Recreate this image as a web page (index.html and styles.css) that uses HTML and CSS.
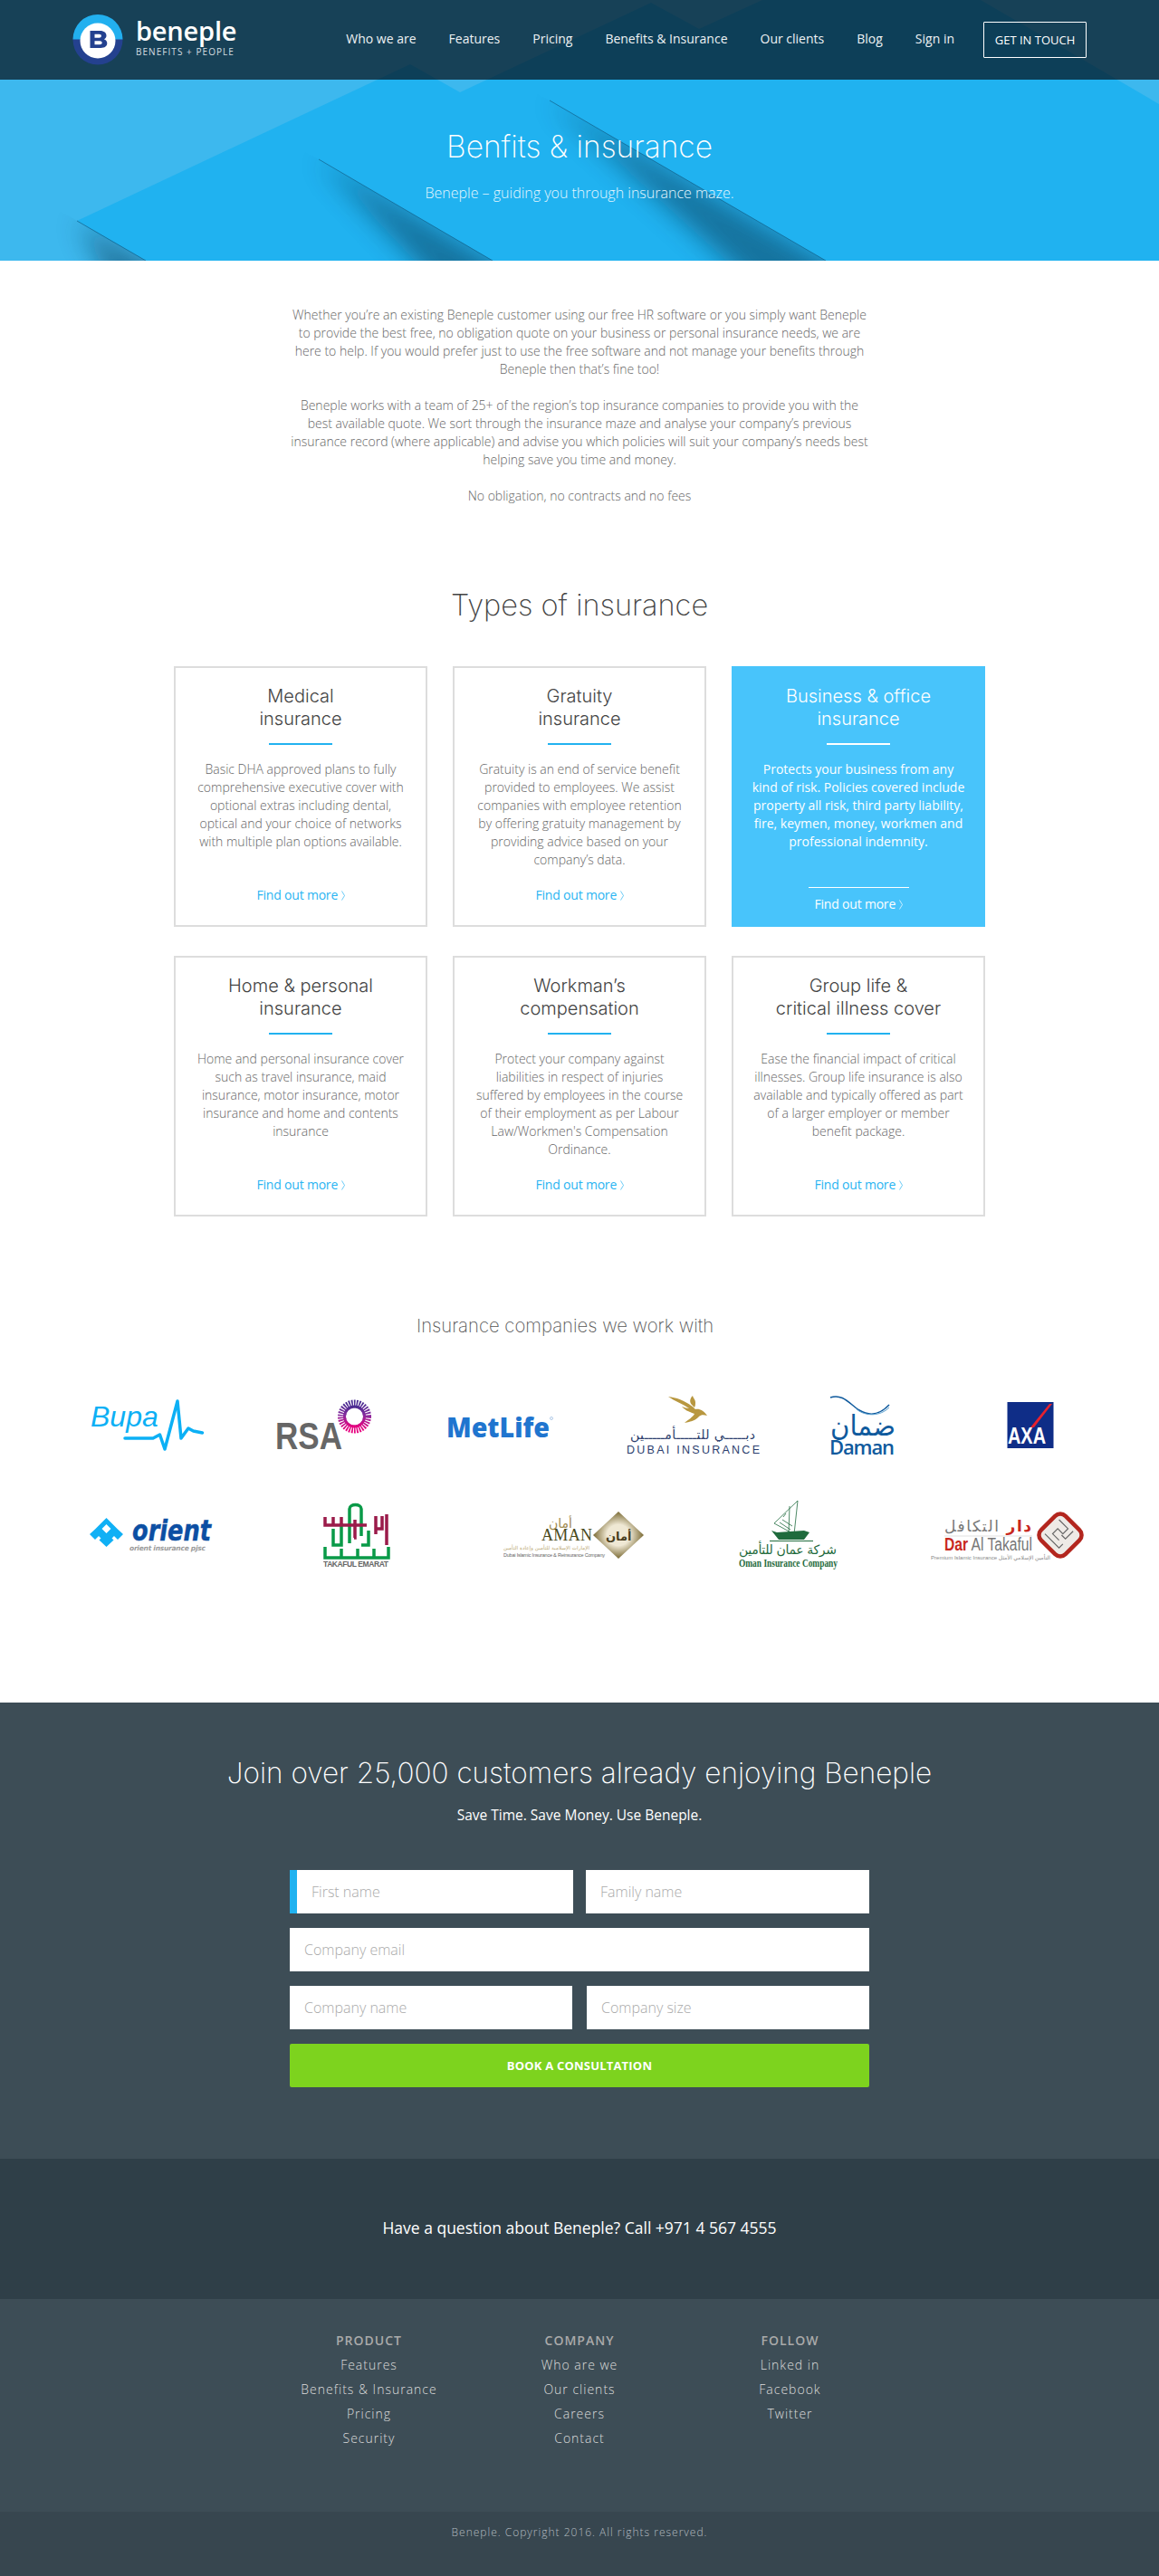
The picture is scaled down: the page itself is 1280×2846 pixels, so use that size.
FILE: index.html
```html
<!DOCTYPE html>
<html lang="en">
<head>
    <meta charset="UTF-8">
    <meta name="viewport" content="width=device-width, initial-scale=1.0">
    <title>Beneple - Benefits &amp; Insurance</title>
    <link rel="stylesheet" href="styles.css">
</head>
<body>
    <section class="hero">
        <svg class="hero-bg" width="1280" height="288" viewBox="0 0 1280 288">
            <defs>
                <filter id="soft" x="-30%" y="-30%" width="160%" height="160%"><feGaussianBlur stdDeviation="14"/></filter>
                <clipPath id="clip1"><polygon points="-90,142 261,346 100,620 -400,400"/></clipPath>
                <clipPath id="clip2"><polygon points="180,76 644,346 400,760 -100,500"/></clipPath>
                <clipPath id="clip3"><polygon points="435,11 1012,346 700,800 200,500"/></clipPath>
            </defs>
            <polygon fill="#20b2f0" points="85,244 453,71 508,102 719,3 772,32 842,0 1083,0 1280,115 1280,288 161,288"/>
            <g clip-path="url(#clip1)"><polygon filter="url(#soft)" fill="#0a3f5c" opacity=".55" points="85,244 261,346 160,380"/></g>
            <g clip-path="url(#clip2)"><polygon filter="url(#soft)" fill="#0a3f5c" opacity=".55" points="352,176 644,346 550,385"/></g>
            <g clip-path="url(#clip3)"><polygon filter="url(#soft)" fill="#0a3f5c" opacity=".55" points="607,111 1012,346 910,385"/></g>
            <line class="hero-edge" x1="85" y1="244" x2="161" y2="288"/>
            <line class="hero-edge" x1="352" y1="176" x2="544" y2="288"/>
            <line class="hero-edge" x1="607" y1="111" x2="912" y2="288"/>
        </svg>

        <header class="site-header">
            <a class="logo" href="#">
                <svg width="56" height="56" viewBox="0 0 56 56">
                    <circle cx="28" cy="28" r="27.5" fill="#24418f"/>
                    <path d="M.5 27.5a27.5 27.5 0 0 1 55 0z" fill="#22b0ef"/>
                    <circle cx="28" cy="29" r="19.5" fill="#fff"/>
                    <path fill-rule="evenodd" fill="#24418f" d="M19.500 18h11c4.500 0 7 2.300 7 5.200 0 2-1 3.400-2.700 4.100 2.200.7 3.500 2.300 3.500 4.500 0 3.300-2.600 5.200-7 5.200H19.500zm5 3.800v3.900h5c1.500 0 2.400-.8 2.400-2s-.9-1.900-2.400-1.900zm0 7.500v4h5.600c1.600 0 2.600-.8 2.600-2s-1-2-2.600-2z"/>
                </svg>
                <div class="logo-text">
                    <span class="logo-name">beneple</span>
                    <span class="logo-tag">BENEFITS + PEOPLE</span>
                </div>
            </a>
            <nav class="main-nav">
                <a href="#">Who we are</a>
                <a href="#">Features</a>
                <a href="#">Pricing</a>
                <a href="#">Benefits &amp; Insurance</a>
                <a href="#">Our clients</a>
                <a href="#">Blog</a>
                <a href="#">Sign in</a>
                <a class="nav-btn" href="#">GET IN TOUCH</a>
            </nav>
        </header>

        <div class="hero-text">
            <h1>Benfits &amp; insurance</h1>
            <p>Beneple – guiding you through insurance maze.</p>
        </div>
    </section>

    <section class="intro">
        <p>Whether you’re an existing Beneple customer using our free HR software or you simply want Beneple to provide the best free, no obligation quote on your business or personal insurance needs, we are here to help. If you would prefer just to use the free software and not manage your benefits through Beneple then that’s fine too!</p>
        <p>Beneple works with a team of 25+ of the region’s top insurance companies to provide you with the best available quote. We sort through the insurance maze and analyse your company’s previous insurance record (where applicable) and advise you which policies will suit your company’s needs best helping save you time and money.</p>
        <p>No obligation, no contracts and no fees</p>
    </section>

    <section class="types">
        <h2>Types of insurance</h2>
        <div class="card-grid">
            <article class="card">
                <h3>Medical<br>insurance</h3>
                <p>Basic DHA approved plans to fully comprehensive executive cover with optional extras including dental, optical and your choice of networks with multiple plan options available.</p>
                <a class="card-link" href="#">Find out more <svg class="chevron" width="4" height="11" viewBox="0 0 4 11"><polyline points="0.5,0.5 3.500,5.500 0.5,10.500"/></svg></a>
            </article>
            <article class="card">
                <h3>Gratuity<br>insurance</h3>
                <p>Gratuity is an end of service benefit provided to employees. We assist companies with employee retention by offering gratuity management by providing advice based on your company’s data.</p>
                <a class="card-link" href="#">Find out more <svg class="chevron" width="4" height="11" viewBox="0 0 4 11"><polyline points="0.5,0.5 3.500,5.500 0.5,10.500"/></svg></a>
            </article>
            <article class="card card-active">
                <h3>Business &amp; office<br>insurance</h3>
                <p>Protects your business from any kind of risk. Policies covered include property all risk, third party liability, fire, keymen, money, workmen and professional indemnity.</p>
                <a class="card-link" href="#">Find out more <svg class="chevron" width="4" height="11" viewBox="0 0 4 11"><polyline points="0.5,0.5 3.500,5.500 0.5,10.500"/></svg></a>
            </article>
            <article class="card">
                <h3>Home &amp; personal<br>insurance</h3>
                <p>Home and personal insurance cover such as travel insurance, maid insurance, motor insurance, motor insurance and home and contents insurance</p>
                <a class="card-link" href="#">Find out more <svg class="chevron" width="4" height="11" viewBox="0 0 4 11"><polyline points="0.5,0.5 3.500,5.500 0.5,10.500"/></svg></a>
            </article>
            <article class="card">
                <h3>Workman’s<br>compensation</h3>
                <p>Protect your company against liabilities in respect of injuries suffered by employees in the course of their employment as per Labour Law/Workmen's Compensation Ordinance.</p>
                <a class="card-link" href="#">Find out more <svg class="chevron" width="4" height="11" viewBox="0 0 4 11"><polyline points="0.5,0.5 3.500,5.500 0.5,10.500"/></svg></a>
            </article>
            <article class="card">
                <h3>Group life &amp;<br>critical illness cover</h3>
                <p>Ease the financial impact of critical illnesses. Group life insurance is also available and typically offered as part of a larger employer or member benefit package.</p>
                <a class="card-link" href="#">Find out more <svg class="chevron" width="4" height="11" viewBox="0 0 4 11"><polyline points="0.5,0.5 3.500,5.500 0.5,10.500"/></svg></a>
            </article>
        </div>
    </section>

    <section class="partners">
        <h2>Insurance companies we work with</h2>
        <div class="logo-row logo-row-top">
            <!-- Bupa -->
            <svg width="134" height="70" viewBox="0 0 134 70">
                <text class="lg-bupa" x="0" y="36">Bupa</text>
                <polyline points="38,49 69,49 76.500,45 82,61 96,8 100,49 108,38 113.500,41 123.500,43" fill="none" stroke="#0cb0f5" stroke-width="3.500" stroke-linejoin="round" stroke-linecap="round"/>
            </svg>
            <!-- RSA -->
            <svg width="119" height="70" viewBox="0 0 119 70">
                <defs>
                    <linearGradient id="rsaRing" x1="0" y1="0" x2="0" y2="1">
                        <stop offset="0" stop-color="#4b2c92"/>
                        <stop offset=".45" stop-color="#8a2a9e"/>
                        <stop offset="1" stop-color="#e6007e"/>
                    </linearGradient>
                </defs>
                <text class="lg-rsa" x="0" y="61" textLength="74" lengthAdjust="spacingAndGlyphs">RSA</text>
                <circle cx="87.500" cy="25" r="14" fill="none" stroke="url(#rsaRing)" stroke-width="9" stroke-dasharray="1.500 1.100"/>
                <circle cx="87.500" cy="25" r="11" fill="none" stroke="url(#rsaRing)" stroke-width="3"/>
            </svg>
            <!-- MetLife -->
            <svg width="129" height="70" viewBox="0 0 129 70">
                <text class="lg-metlife" x="0" y="48" textLength="114" lengthAdjust="spacingAndGlyphs">MetLife</text>
                <circle cx="116" cy="27" r="1.500" fill="none" stroke="#7fa9d8" stroke-width=".6"/>
            </svg>
            <!-- Dubai Insurance -->
            <svg width="154" height="70" viewBox="0 0 154 70">
                <g fill="#b8973f">
                    <path d="M46 3c10 1 22 6 30 14 4-1 9 1 13 7-4-1-7-1-9 1-3 4-10 6-16 7 3-3 9-6 11-10-8-3-10-4-14-8 3 1 6 2 8 2-7-5-16-8-23-13z"/>
                    <path d="M72 12c-3-3-2-7 1-10 0 2 3 4 3 7 0 2 0 4-1 6z"/>
                </g>
                <text class="lg-dubai-ar" x="4" y="50" textLength="138">دبـــــي للتـــــأمـــــين</text>
                <text class="lg-dubai" x="0" y="66" textLength="147">DUBAI INSURANCE</text>
            </svg>
            <!-- Daman -->
            <svg width="126" height="70" viewBox="0 0 126 70">
                <path d="M1 4c14-5 22 8 32 14s22 6 33-6" fill="none" stroke="#0f5a9d" stroke-width="1.500"/>
                <path d="M30 17c10 8 26 8 36-2" fill="none" stroke="#5aa0d0" stroke-width="1"/>
                <path d="M44 3a7 7 0 1 1 0 14 5.500 5.500 0 1 0 0-14z" fill="#8a1c3e"/>
                <text class="lg-daman-ar" x="1" y="46" textLength="72" lengthAdjust="spacingAndGlyphs">ضمان</text>
                <text class="lg-daman" x="0" y="67" textLength="72">Daman</text>
            </svg>
            <!-- AXA -->
            <svg width="52" height="70" viewBox="0 0 52 70">
                <rect x=".5" y="9" width="51" height="51" fill="#0f2d87"/>
                <polygon points="47,11 50,11 30,37 26,37" fill="#e8212e"/>
                <text class="lg-axa" x="1" y="55" textLength="42" lengthAdjust="spacingAndGlyphs">AXA</text>
            </svg>
        </div>
        <div class="logo-row">
            <!-- Orient -->
            <svg width="188" height="82" viewBox="0 0 188 82">
                <path fill="#10b0f5" fill-rule="evenodd" d="M18.500 22L31 34.500l6 5.500-6 6-4-4-2.500 2.500 2 2-8 7.500-8-7.500 2-2L10 42l-4 4-6-6 6-5.500zm0 7l-5 5 5 5 5-5z"/>
                <text class="lg-orient" x="47" y="47" textLength="87" lengthAdjust="spacingAndGlyphs">orient</text>
                <text class="lg-orient-sub" x="44" y="58" textLength="84">orient insurance pjsc</text>
            </svg>
            <!-- Takaful Emarat -->
            <svg width="129" height="82" viewBox="0 0 129 82">
                <g fill="none" stroke-width="3.500">
                    <path stroke="#0a9a48" d="M29 50V12c0-6 13-6 13 0v30M11 34v18h9V28M50 36v16h-8M2 54v12h70V54M20 56v10M38 56v10M56 56v10"/>
                    <path stroke="#9b1b4a" d="M2 21v9h46M11 21v9M20 21v9M57 34h8v-14M70 18v34M58 20v20M35 24v20h-1"/>
                </g>
                <text class="lg-takaful" x="0" y="76" textLength="72">TAKAFUL EMARAT</text>
            </svg>
            <!-- Aman -->
            <svg width="190" height="82" viewBox="0 0 190 82">
                <defs>
                    <radialGradient id="amanGold">
                        <stop offset=".45" stop-color="#efe8d4"/>
                        <stop offset="1" stop-color="#7a6a34"/>
                    </radialGradient>
                </defs>
                <text class="lg-aman-ar" x="50" y="33">أمان</text>
                <text class="lg-aman" x="42" y="47" textLength="56">AMAN</text>
                <text class="lg-aman-small" x="0" y="57" textLength="95">الإمارات الإسلامية للتأمين وإعادة التأمين</text>
                <text class="lg-aman-latin" x="0" y="65" textLength="112">Dubai Islamic Insurance &amp; Reinsurance Company</text>
                <polygon points="99,41 127,15 155,41 127,67" fill="url(#amanGold)"/>
                <text class="lg-aman-mark" x="113" y="47">أمان</text>
            </svg>
            <!-- Oman Insurance -->
            <svg width="142" height="82" viewBox="0 0 142 82">
                <g fill="none" stroke="#1f6b3d" stroke-width=".8">
                    <path d="M65 3L39 28l22 12zM56 9l-1 30M52 17l-3 4M45 27l12 8M48 24l11 7"/>
                </g>
                <path d="M36 36l6 2 30-2 6 2-6 8H44zM34 47h48v1H34z" fill="#1f6b3d"/>
                <text class="lg-oman-ar" x="0" y="62" textLength="108">شركة عمان للتأمين</text>
                <text class="lg-oman" x="0" y="76" textLength="109" lengthAdjust="spacingAndGlyphs">Oman Insurance Company</text>
            </svg>
            <!-- Dar Al Takaful -->
            <svg width="172" height="82" viewBox="0 0 172 82">
                <rect x="124" y="22" width="38" height="38" rx="8" transform="rotate(45 143 41)" fill="#eeeae6" stroke="#b3261e" stroke-width="4.500"/>
                <g fill="none" stroke="#666" stroke-width="1.200" transform="rotate(45 143 41)">
                    <path d="M130 30h14v8h-8v8h10M150 28v12h-6M130 52h22v-6"/>
                </g>
                <text class="lg-dar-ar" x="15" y="37" textLength="96"><tspan class="lg-dar-red">دار</tspan> التكافل</text>
                <line x1="15" y1="42" x2="112" y2="42" stroke="#ccc" stroke-width=".6"/>
                <text class="lg-dar" x="15" y="58" textLength="97" lengthAdjust="spacingAndGlyphs"><tspan class="lg-dar-red">Dar</tspan> Al Takaful</text>
                <text class="lg-dar-sub" x="0" y="68" textLength="132">Premium Islamic Insurance  التأمين الإسلامي الأمثل</text>
            </svg>
        </div>
    </section>

    <section class="signup">
        <h2>Join over 25,000 customers already enjoying Beneple</h2>
        <p class="signup-sub">Save Time. Save Money. Use Beneple.</p>
        <form class="signup-form">
            <div class="form-row form-row-tight">
                <input class="input-focus" type="text" placeholder="First name">
                <input type="text" placeholder="Family name">
            </div>
            <input type="text" placeholder="Company email">
            <div class="form-row">
                <input type="text" placeholder="Company name">
                <input type="text" placeholder="Company size">
            </div>
            <button type="button">BOOK A CONSULTATION</button>
        </form>
    </section>

    <section class="call-band">
        <p>Have a question about Beneple? Call +971 4 567 4555</p>
    </section>

    <footer class="site-footer">
        <div class="footer-cols">
            <div class="footer-col">
                <h4>PRODUCT</h4>
                <a href="#">Features</a>
                <a href="#">Benefits &amp; Insurance</a>
                <a href="#">Pricing</a>
                <a href="#">Security</a>
            </div>
            <div class="footer-col">
                <h4>COMPANY</h4>
                <a href="#">Who are we</a>
                <a href="#">Our clients</a>
                <a href="#">Careers</a>
                <a href="#">Contact</a>
            </div>
            <div class="footer-col">
                <h4>FOLLOW</h4>
                <a href="#">Linked in</a>
                <a href="#">Facebook</a>
                <a href="#">Twitter</a>
            </div>
        </div>
        <div class="copyright">Beneple. Copyright 2016. All rights reserved.</div>
    </footer>
</body>
</html>
```

FILE: styles.css
```css
* {
    margin: 0;
    padding: 0;
    box-sizing: border-box;
}

body {
    font-family: 'Open Sans', 'Liberation Sans', sans-serif;
    font-size: 14px;
    line-height: 20px;
    color: #666;
    background: #fff;
}

a {
    text-decoration: none;
    color: inherit;
}

/* hero + header */

.hero {
    position: relative;
    height: 288px;
    background: #3db8ee;
    overflow: hidden;
}

.hero-bg {
    position: absolute;
    top: 0;
    left: 0;
}

.hero-edge {
    stroke: #12628c;
    stroke-width: 1;
    opacity: .7;
}

.site-header {
    position: relative;
    display: flex;
    justify-content: space-between;
    align-items: center;
    height: 88px;
    padding: 0 80px;
    background: rgba(3, 1, 6, 0.65);
}

.logo {
    display: flex;
    align-items: center;
    gap: 14px;
    color: #fff;
}

.logo-text {
    display: flex;
    flex-direction: column;
    margin-top: -6px;
}

.logo-name {
    margin-bottom: 2px;
    font-size: 29px;
    font-weight: 600;
    line-height: 30px;
    letter-spacing: -0.2px;
}

.logo-tag {
    font-size: 10px;
    line-height: 13px;
    letter-spacing: 1.05px;
    color: #d5dde1;
}

.main-nav {
    display: flex;
    align-items: center;
    gap: 36px;
    color: #eef2f4;
}

.main-nav a {
    padding-bottom: 2px;
}

.main-nav .nav-btn {
    display: block;
    width: 114px;
    height: 40px;
    margin-left: -4px;
    padding-bottom: 0;
    border: 1px solid #fff;
    border-radius: 1px;
    font-size: 13px;
    line-height: 38px;
    text-align: center;
    color: #fff;
}

.hero-text {
    position: relative;
    text-align: center;
    color: #fff;
}

.hero-text h1 {
    margin-top: 54px;
    font-family: Inter, 'Open Sans', sans-serif;
    font-size: 33.5px;
    font-weight: 200;
    line-height: 40px;
}

.hero-text p {
    margin-top: 19px;
    font-size: 16px;
    font-weight: 300;
    line-height: 24px;
    color: #e4f6fe;
}

/* intro */

.intro {
    width: 640px;
    margin: 50px auto 0;
    font-weight: 300;
    text-align: center;
}

.intro p + p {
    margin-top: 20px;
}

/* cards */

.types {
    margin-top: 91px;
}

.types h2 {
    font-family: Inter, 'Open Sans', sans-serif;
    font-size: 32.5px;
    font-weight: 200;
    line-height: 40px;
    color: #444;
    text-align: center;
}

.card-grid {
    display: grid;
    grid-template-columns: repeat(3, 280px);
    column-gap: 28px;
    row-gap: 32px;
    justify-content: center;
    margin-top: 47px;
}

.card {
    display: flex;
    flex-direction: column;
    align-items: center;
    height: 288px;
    padding: 19px 20px 23px;
    border: 2px solid #ddd;
    text-align: center;
}

.card h3 {
    font-family: Inter, 'Open Sans', sans-serif;
    font-size: 20px;
    font-weight: 300;
    line-height: 25px;
    color: #444;
}

.card h3::after {
    content: "";
    display: block;
    width: 70px;
    height: 2px;
    margin: 14px auto 17px;
    background: #22b2f0;
}

.card p {
    font-weight: 300;
}

.card-link {
    margin-top: auto;
    letter-spacing: -0.2px;
    color: #2ab4f2;
}

.chevron {
    fill: none;
    stroke: currentColor;
    stroke-width: 0.7;
    vertical-align: -1px;
}

.card-active {
    background: #48c4fb;
    border-color: #48c4fb;
    color: #fff;
}

.card-active h3 {
    color: #fff;
}

.card-active h3::after {
    background: #fff;
}

.card-active p {
    font-weight: 400;
}

.card-active .card-link {
    width: 111px;
    margin-bottom: -10px;
    padding-top: 8px;
    border-top: 1px solid #fff;
    color: #fff;
}

/* partner logos */

.partners {
    margin-top: 106px;
    height: 431px;
}

.partners h2 {
    padding-right: 32px;
    font-family: Inter, 'Open Sans', sans-serif;
    font-size: 20.3px;
    font-weight: 250;
    line-height: 30px;
    color: #555;
    text-align: center;
}

.logo-row {
    display: flex;
    gap: 70px;
    padding-left: 99px;
    margin-top: 45px;
}

.logo-row-top {
    padding-left: 100px;
    margin-top: 60px;
}

.logo-row svg {
    display: block;
    flex: none;
}

.lg-bupa { font: italic 32px 'Liberation Sans', sans-serif; fill: #0cb0f5; }
.lg-rsa { font: bold 42px 'Liberation Sans', sans-serif; fill: #666; }
.lg-metlife { font: 800 30px 'Open Sans', sans-serif; fill: #1f75cf; }
.lg-dubai-ar { font: 14px 'DejaVu Sans', sans-serif; fill: #2c3e6e; }
.lg-dubai { font: 12.5px 'Liberation Sans', sans-serif; fill: #2c3e6e; }
.lg-daman-ar { font: 31px 'DejaVu Sans', sans-serif; fill: #0f5a9d; }
.lg-daman { font: 600 22px 'Open Sans', sans-serif; fill: #0f5a9d; }
.lg-axa { font: bold 25px 'Liberation Sans', sans-serif; fill: #fff; }
.lg-orient { font: italic bold 32px 'DejaVu Sans', sans-serif; fill: #0c4fa3; stroke: #0c4fa3; stroke-width: .5; }
.lg-orient-sub { font: italic bold 7.5px 'DejaVu Sans', sans-serif; fill: #9a9a9a; }
.lg-takaful { font: bold 8.5px 'Liberation Sans', sans-serif; fill: #666; }
.lg-aman-ar { font: 14px 'DejaVu Sans', sans-serif; fill: #a08a50; }
.lg-aman { font: 18px 'Liberation Serif', serif; fill: #4a4a20; }
.lg-aman-small { font: 5.5px 'DejaVu Sans', sans-serif; fill: #b8a570; }
.lg-aman-latin { font: 5.5px 'Liberation Sans', sans-serif; fill: #666; }
.lg-aman-mark { font: bold 13px 'DejaVu Sans', sans-serif; fill: #4a4020; }
.lg-oman-ar { font: 14px 'DejaVu Sans', sans-serif; fill: #1f6b3d; }
.lg-oman { font: bold 11.5px 'Liberation Serif', serif; fill: #1f6b3d; }
.lg-dar-ar { font: 17px 'DejaVu Sans', sans-serif; fill: #777; }
.lg-dar { font: 20px 'Liberation Sans', sans-serif; fill: #777; }
.lg-dar-red { fill: #c8281e; font-weight: bold; }
.lg-dar-sub { font: 6px 'Liberation Sans', 'DejaVu Sans', sans-serif; fill: #888; }

/* signup */

.signup {
    height: 504px;
    padding-top: 58px;
    background: #3d4d56;
    text-align: center;
    color: #fff;
}

.signup h2 {
    font-family: Inter, 'Open Sans', sans-serif;
    font-size: 31.5px;
    font-weight: 200;
    line-height: 40px;
}

.signup-sub {
    margin-top: 14px;
    font-size: 15.5px;
    line-height: 24px;
}

.signup-form {
    display: flex;
    flex-direction: column;
    gap: 16px;
    width: 640px;
    margin: 49px auto 0;
}

.form-row {
    display: grid;
    grid-template-columns: 1fr 1fr;
    column-gap: 16px;
}

.form-row-tight {
    column-gap: 14px;
}

.signup-form input {
    width: 100%;
    height: 48px;
    padding-left: 16px;
    border: 0;
    border-radius: 0;
    outline: 0;
    background: #fff;
    font-family: inherit;
    font-size: 16px;
    font-weight: 300;
}

.signup-form input::placeholder {
    color: #aaa;
    opacity: 1;
}

.signup-form .input-focus {
    border-left: 8px solid #20b2f0;
}

.signup-form button {
    height: 48px;
    border: 0;
    border-radius: 2px;
    background: #7dd31e;
    color: #fff;
    font-family: inherit;
    font-size: 13px;
    font-weight: 700;
    letter-spacing: 0.2px;
}

/* bottom */

.call-band {
    height: 155px;
    padding-top: 64px;
    background: #2f3f48;
    color: #fff;
    font-size: 17.5px;
    line-height: 24px;
    text-align: center;
}

.site-footer {
    background: #3d4d56;
    color: #ddd;
}

.footer-cols {
    display: grid;
    grid-template-columns: repeat(3, 232.5px);
    justify-content: center;
    height: 235px;
    padding-top: 32px;
    text-align: center;
}

.footer-col {
    display: flex;
    flex-direction: column;
    line-height: 27px;
    letter-spacing: 1px;
    font-weight: 300;
}

.footer-col h4 {
    font-size: 14px;
    font-weight: 600;
    color: #aaa;
}

.copyright {
    height: 71px;
    padding-top: 13px;
    background: #37464f;
    font-size: 12px;
    font-weight: 300;
    letter-spacing: 1px;
    color: #b5bcc0;
    text-align: center;
}
```
